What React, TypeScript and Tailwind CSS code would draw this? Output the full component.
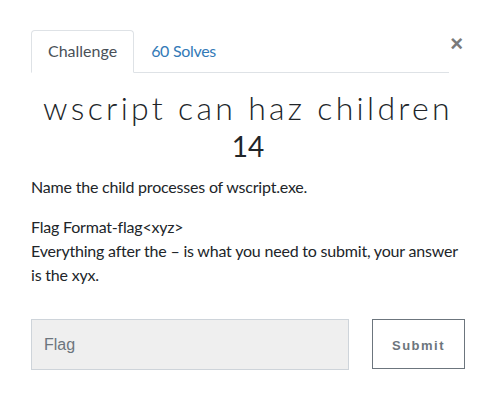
import React from "react";

export default function App() {
  return (
    <div className="w-[495px] h-[417px] bg-white overflow-hidden" style={{ fontFamily: "Lato, 'Liberation Sans', sans-serif" }}>
      <div className="pl-[31px] pr-[30px] pt-[30px]">
        <div className="flex items-start">
          <div className="flex flex-1 border-b border-[#dee2e6] mr-[1px]">
            <div className="-mb-px px-4 py-2 text-[16px] leading-6 text-[#495057] bg-white border border-[#dee2e6] border-b-white rounded-t-[4px]">
              Challenge
            </div>
            <div className="px-4 py-2 text-[16px] leading-6 tracking-[-0.3px] text-[#337ab7] border border-transparent">
              60 Solves
            </div>
          </div>
          <button className="text-[22px] leading-none font-bold text-[#7a7a7a] mt-[3px] mr-[2px]" style={{ fontFamily: "'Liberation Sans', sans-serif" }}>
            ×
          </button>
        </div>
        <h2 className="text-center text-[32px] leading-[38px] text-[#212529] tracking-[3.3px] mt-[16px] font-light" style={{ fontFamily: "Lato, sans-serif" }}>
          wscript can haz children
        </h2>
        <h3 className="text-center text-[28px] leading-[34px] text-[#212529] mt-[2px]">14</h3>
        <div className="text-[16px] leading-6 tracking-[-0.2px] text-[#212529] mt-[12px]">
          <p>Name the child processes of wscript.exe.</p>
          <p className="mt-4">
            Flag Format-flag&lt;xyz&gt;
            <br />
            Everything after the – is what you need to submit, your answer is the xyx.
          </p>
        </div>
        <div className="flex mt-[32px] gap-[23px]">
          <input
            placeholder="Flag"
            className="w-[318px] h-[51px] bg-[#efefef] border border-[#ced4da] px-3 text-[16px] text-[#495057] placeholder:text-[#6c757d] outline-none"
            style={{ fontFamily: "'Liberation Sans', sans-serif" }}
          />
          <button
            className="w-[93px] h-[50px] pt-[3px] border border-[#6c757d] text-[13px] font-bold tracking-[1.5px] text-[#6c757d] bg-white"
            style={{ fontFamily: "'Liberation Sans', sans-serif" }}
          >
            Submit
          </button>
        </div>
      </div>
    </div>
  );
}
